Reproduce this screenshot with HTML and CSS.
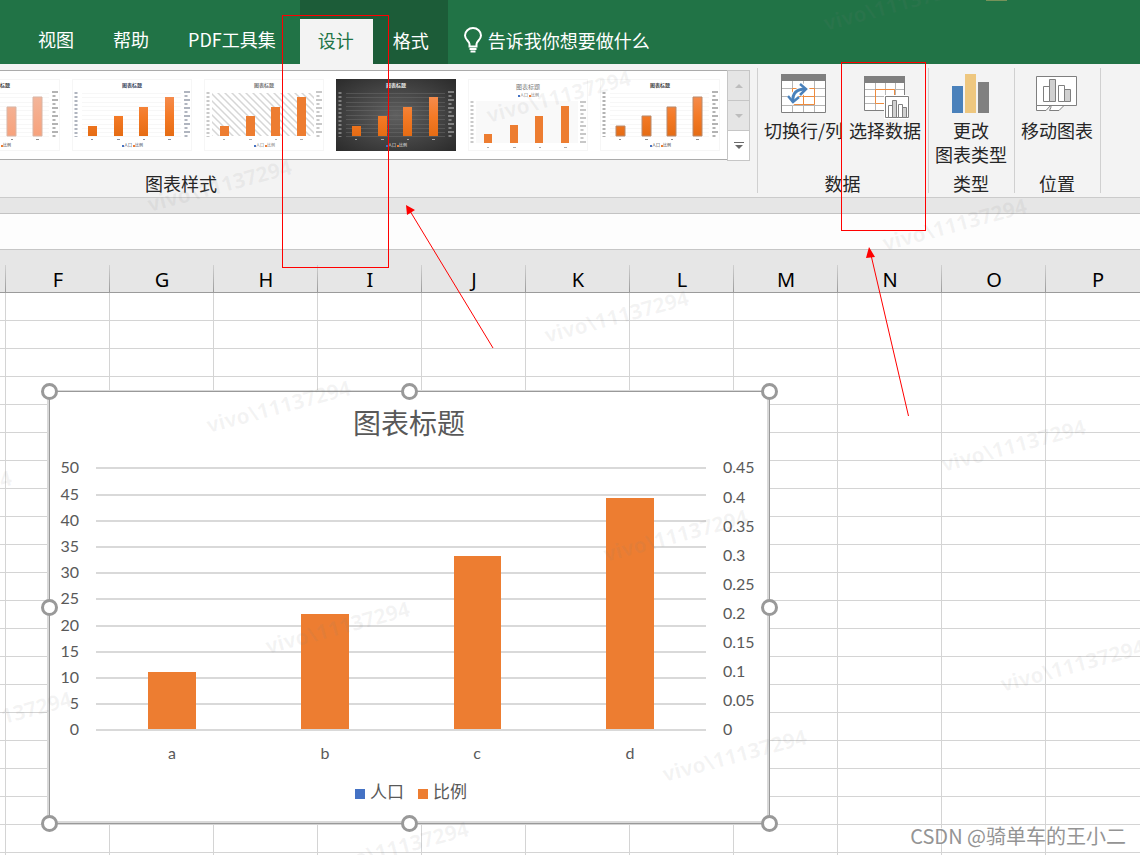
FILE: index.html
```html
<!DOCTYPE html>
<html lang="zh-CN">
<head>
<meta charset="utf-8">
<title>图表设计</title>
<link rel="stylesheet" href="styles.css">
</head>
<body>
<div class="app">
  <header class="titlebar">
    <nav class="tabs" aria-label="功能区选项卡">
      <button class="tab" type="button">视图</button>
      <button class="tab" type="button">帮助</button>
      <button class="tab" type="button">PDF工具集</button>
      <div class="context-tabs">
        <button class="tab tab-active" type="button">设计</button>
        <button class="tab tab-format" type="button">格式</button>
      </div>
      <button class="tell-me" type="button">
        <svg class="bulb" width="20" height="26" viewBox="0 0 20 26" aria-hidden="true">
          <path d="M6.500 19.500V17C6.500 14.500 2 12.500 2 8.500A8 7.500 0 0 1 18 8.500C18 12.500 13.500 14.500 13.500 17V19.500Z"/>
          <path d="M6.500 22H13.500M7.500 24.500H12.500"/>
        </svg>
        <span>告诉我你想要做什么</span>
      </button>
    </nav>
    <span class="title-mark"></span>
  </header>

  <section class="ribbon" aria-label="设计">
    <svg class="defs" width="0" height="0" aria-hidden="true">
      <defs>
        <linearGradient id="orange" x1="0" y1="0" x2="0" y2="1"><stop offset="0" stop-color="#f58b4c"/><stop offset=".5" stop-color="#f47a26"/><stop offset="1" stop-color="#e56c14"/></linearGradient>
        <linearGradient id="pale" x1="0" y1="0" x2="0" y2="1"><stop offset="0" stop-color="#f3b59a"/><stop offset="1" stop-color="#f7a27c"/></linearGradient>
        <radialGradient id="night" cx=".5" cy=".5" r=".7"><stop offset="0" stop-color="#606060"/><stop offset="1" stop-color="#2b2b2b"/></radialGradient>
        <pattern id="hatch" width="7" height="7" patternUnits="userSpaceOnUse"><path d="M-1 -1L8 8M-1 6L1 8M6 -1L8 1" stroke="#d6d6d6" stroke-width="1.500"/></pattern>
        <symbol id="axes" viewBox="0 0 120 72">
          <g class="axis-marks">
            <path d="M4 13V58M114 12V58"/>
            <path class="axis-wide" d="M115 12V58"/>
          </g>
          <path class="tiny-marks" d="M19 60.500h2M45 60.500h3M71 60.500h2M96 60.500h3"/>
          <text class="tiny-title" x="60" y="8">图表标题</text>
          <rect x="50" y="66" width="2" height="2" fill="#4472c4"/>
          <rect x="61" y="66" width="2" height="2" fill="#ed7d31"/>
          <text class="tiny-legend" x="52" y="68">人口</text>
          <text class="tiny-legend" x="63" y="68">比例</text>
        </symbol>
        <symbol id="lines" viewBox="0 0 120 72"><path d="M10 14.500H109M10 18.500H109M10 23.500H109M10 27.500H109M10 31.500H109M10 36.500H109M10 40.500H109M10 45.500H109M10 49.500H109M10 53.500H109M10 57.500H109"/></symbol>
        <symbol id="bars" viewBox="0 0 120 72"><path d="M16 47h9v10h-9zM42 37h9v20h-9zM67 28h9v29h-9zM93 18h9v39h-9z"/></symbol>
      </defs>
    </svg>

    <div class="group group-styles">
      <div class="gallery">
        <div class="strip">
          <button class="thumb" type="button" aria-label="样式 1"><svg width="120" height="72"><use class="rules" href="#lines"/><use href="#bars" fill="url(#pale)" stroke="#d9b5a5"/><use href="#axes"/></svg></button>
          <button class="thumb thumb-navy" type="button" aria-label="样式 2"><svg width="120" height="72"><use class="rules" href="#lines"/><use href="#bars" fill="url(#orange)"/><use href="#axes"/></svg></button>
          <button class="thumb thumb-soft" type="button" aria-label="样式 3"><svg width="120" height="72"><rect x="8" y="14" width="102" height="43" fill="url(#hatch)"/><use href="#bars" fill="#ed7d31"/><use href="#axes"/></svg></button>
          <button class="thumb thumb-dark" type="button" aria-label="样式 4"><svg width="120" height="72"><rect width="120" height="72" fill="url(#night)"/><use class="rules" href="#lines"/><use href="#bars" fill="url(#orange)"/><use href="#axes"/></svg></button>
          <button class="thumb thumb-soft" type="button" aria-label="样式 5"><svg width="120" height="72">
            <rect x="8" y="22" width="102" height="42" fill="#f9f9f9"/>
            <path d="M16 55h8v9h-8zM42 46h8v18h-8zM67 37h8v27h-8zM93 27h8v37h-8z" fill="#ed7d31"/>
            <g class="axis-marks"><path d="M4 22V65M114 22V65"/><path class="axis-wide" d="M115 22V65"/></g>
            <path class="tiny-marks" d="M19 68.500h2M45 68.500h3M71 68.500h2M96 68.500h3"/>
            <text class="tiny-title tiny-title-wide" x="60" y="10">图表标题</text>
            <rect x="50" y="16" width="2" height="2" fill="#4472c4"/><rect x="61" y="16" width="2" height="2" fill="#ed7d31"/>
            <text class="tiny-legend" x="52" y="18">人口</text><text class="tiny-legend" x="63" y="18">比例</text>
          </svg></button>
          <button class="thumb" type="button" aria-label="样式 6"><svg width="120" height="72"><use class="rules" href="#lines"/><use href="#bars" fill="url(#orange)" stroke="#b98a6c"/><use href="#axes"/></svg></button>
        </div>
        <div class="scroller">
          <button class="scroll-btn" type="button" aria-label="向上"><svg width="10" height="6"><path d="M1 5L5 1L9 5Z"/></svg></button>
          <button class="scroll-btn" type="button" aria-label="向下"><svg width="10" height="6"><path d="M1 1L5 5L9 1Z"/></svg></button>
          <button class="scroll-btn scroll-more" type="button" aria-label="其他"><svg width="10" height="8"><path d="M0 0H10V1H0ZM1 3L5 7L9 3Z"/></svg></button>
        </div>
      </div>
      <div class="group-label group-label-styles">图表样式</div>
    </div>

    <div class="group">
      <div class="commands">
        <button class="command" type="button">
          <svg width="48" height="45" viewBox="1 0 48 45" aria-hidden="true">
            <path d="M2 2H46V40H2Z" fill="#fff"/>
            <path d="M13.500 8V40M24.500 8V40M35.500 8V40M2 15.500H46M2 23.500H46M2 32.500H46" stroke="#b5b5b5"/>
            <path d="M2.500 2.500H46.500V39.500H2.500Z" fill="none" stroke="#7f7f7f"/>
            <path d="M2 1H47V8H2Z" fill="#7f7f7f"/>
            <path d="M13.500 15.500H35.500V31.500H13.500ZM24.500 15.500V31.500M13.500 23.500H35.500" fill="none" stroke="#ed8b3e"/>
            <path d="M14 29C13 20 18 16 26 16M21 11L27 16L21 22M9 23L14 29L20 24" fill="none" stroke="#fff" stroke-width="5"/>
            <path d="M14 29C13 20 18 16 26 16" fill="none" stroke="#4a81bb" stroke-width="3"/>
            <path d="M21 11L27 16L21 22M9 23L14 29L20 24" fill="none" stroke="#4a81bb" stroke-width="2.500"/>
          </svg>
          <span>切换行/列</span>
        </button>
        <button class="command" type="button">
          <svg width="48" height="45" aria-hidden="true">
            <path d="M3 4H44V38H3Z" fill="#fff"/>
            <path d="M14.500 10V38M24.500 10V38M34.500 10V38M3 16.500H44M3 23.500H44M3 30.500H44" stroke="#b5b5b5"/>
            <path d="M3.500 3.500H43.500V37.500H3.500Z" fill="none" stroke="#7f7f7f"/>
            <path d="M3 3H44V10H3Z" fill="#7f7f7f"/>
            <path d="M14.500 16.500H33.500V30.500H14.500Z" fill="none" stroke="#ed8b3e"/>
            <path d="M23 22H48V46H23Z" fill="#fff"/>
            <path d="M24.500 23.500H47.500V44.500H24.500Z" fill="#fff" stroke="#7f7f7f"/>
            <path d="M27.500 32.500H31.500V44.500H27.500ZM37.500 31.500H41.500V44.500H37.500Z" fill="#fff" stroke="#7f7f7f"/>
            <path d="M31.500 27.500H35.500V44.500H31.500ZM41.500 34.500H45.500V44.500H41.500Z" fill="#d0d0d0" stroke="#7f7f7f"/>
          </svg>
          <span>选择数据</span>
        </button>
      </div>
      <div class="group-label">数据</div>
    </div>

    <div class="group">
      <div class="commands">
        <button class="command" type="button">
          <svg width="48" height="45" aria-hidden="true">
            <path d="M5 13H16V40H5Z" fill="#4a81bb"/><path d="M18 1H29V40H18Z" fill="#eec77f"/><path d="M31 9H42V40H31Z" fill="#808080"/>
          </svg>
          <span>更改<br>图表类型</span>
        </button>
      </div>
      <div class="group-label">类型</div>
    </div>

    <div class="group">
      <div class="commands">
        <button class="command" type="button">
          <svg width="48" height="45" aria-hidden="true" fill="#fff" stroke="#7f7f7f">
            <path d="M3.500 32V37.500H13L18 32Z"/>
            <path d="M18 32.500H31L26 37.500H16.500Q18.500 34 18 32.500Z"/>
            <path d="M3.500 3.500H43.500V32.500H3.500Z"/>
            <path d="M10.500 13.500H16.500V28.500H10.500ZM25.500 12.500H31.500V28.500H25.500Z"/>
            <path d="M16.500 6.500H22.500V28.500H16.500ZM31.500 16.500H37.500V28.500H31.500Z" fill="#d0d0d0"/>
          </svg>
          <span>移动图表</span>
        </button>
      </div>
      <div class="group-label">位置</div>
    </div>
  </section>

  <div class="ribbon-gap"></div>
  <input class="formula" type="text" aria-label="编辑栏">

  <main class="sheet">
    <table class="grid">
      <colgroup><col class="col-edge"><col><col><col><col><col><col><col><col><col><col><col></colgroup>
      <thead>
        <tr><th></th><th>F</th><th>G</th><th>H</th><th>I</th><th>J</th><th>K</th><th>L</th><th>M</th><th>N</th><th>O</th><th>P</th></tr>
      </thead>
      <tbody id="rows"></tbody>
    </table>

    <svg class="chart" width="736" height="448" viewBox="-8 -8 736 448" role="img" aria-label="图表标题">
      <rect x="-2" y="-1" width="723" height="434" fill="#d9d9d9"/>
      <rect x="1" y="1" width="717" height="429" fill="#fff"/>
      <rect class="frame" x="0.500" y="0.500" width="720" height="432"/>
      <text class="chart-title" x="360" y="43">图表标题</text>
      <path class="gridlines" d="M47 77H657M47 104H657M47 130H657M47 156H657M47 182H657M47 208H657M47 235H657M47 261H657M47 287H657M47 313H657M47 339H657"/>
      <g fill="#ed7d31">
        <rect x="99" y="281" width="48" height="57"/>
        <rect x="252" y="223" width="48" height="115"/>
        <rect x="405" y="165" width="47" height="173"/>
        <rect x="557" y="107" width="48" height="231"/>
      </g>
      <g class="axis-left">
        <text x="30" y="82">50</text><text x="30" y="109">45</text><text x="30" y="135">40</text><text x="30" y="161">35</text><text x="30" y="187">30</text><text x="30" y="213">25</text><text x="30" y="240">20</text><text x="30" y="266">15</text><text x="30" y="292">10</text><text x="30" y="318">5</text><text x="30" y="344">0</text>
      </g>
      <g class="axis-right">
        <text x="674" y="82">0.45</text><text x="674" y="112">0.4</text><text x="674" y="141">0.35</text><text x="674" y="170">0.3</text><text x="674" y="199">0.25</text><text x="674" y="228">0.2</text><text x="674" y="257">0.15</text><text x="674" y="286">0.1</text><text x="674" y="315">0.05</text><text x="674" y="344">0</text>
      </g>
      <g class="axis-bottom">
        <text x="123" y="368">a</text><text x="276" y="368">b</text><text x="428" y="368">c</text><text x="581" y="368">d</text>
      </g>
      <rect x="306" y="398" width="10" height="10" fill="#4472c4"/>
      <text class="legend" x="321" y="407">人口</text>
      <rect x="369" y="398" width="10" height="10" fill="#ed7d31"/>
      <text class="legend" x="384" y="407">比例</text>
      <g class="handles">
        <circle cx="0.500" cy="0.500" r="7"/><circle cx="360.500" cy="0.500" r="7"/><circle cx="720.500" cy="0.500" r="7"/>
        <circle cx="0.500" cy="216.500" r="7"/><circle cx="720.500" cy="216.500" r="7"/>
        <circle cx="0.500" cy="432.500" r="7"/><circle cx="360.500" cy="432.500" r="7"/><circle cx="720.500" cy="432.500" r="7"/>
      </g>
    </svg>
  </main>

  <svg class="overlay" aria-hidden="true">
    <g class="stamps">
      <text transform="translate(826 31) rotate(-15)">vivo\11137294</text>
      <text transform="translate(489 123) rotate(-15)">vivo\11137294</text>
      <text transform="translate(150 212) rotate(-15)">vivo\11137294</text>
      <text transform="translate(885 251) rotate(-15)">vivo\11137294</text>
      <text transform="translate(547 343) rotate(-15)">vivo\11137294</text>
      <text transform="translate(209 433) rotate(-15)">vivo\11137294</text>
      <text transform="translate(-130 523) rotate(-15)">vivo\11137294</text>
      <text transform="translate(944 472) rotate(-15)">vivo\11137294</text>
      <text transform="translate(606 562) rotate(-15)">vivo\11137294</text>
      <text transform="translate(268 654) rotate(-15)">vivo\11137294</text>
      <text transform="translate(-70 744) rotate(-15)">vivo\11137294</text>
      <text transform="translate(1003 692) rotate(-15)">vivo\11137294</text>
      <text transform="translate(665 782) rotate(-15)">vivo\11137294</text>
      <text transform="translate(327 874) rotate(-15)">vivo\11137294</text>
    </g>
    <g class="marks">
      <rect x="282.500" y="15.500" width="106" height="252"/>
      <rect x="841.500" y="62.500" width="84" height="168"/>
      <path d="M493 348L410 211M908.500 416L871 255"/>
      <path class="heads" d="M406 205L415 210L407 215ZM869 247L875 257L866 258Z"/>
    </g>
  </svg>
  <div class="credit">CSDN @骑单车的王小二</div>
</div>
<script src="rows.js"></script>
</body>
</html>
```
FILE: styles.css
```css
* { box-sizing: border-box; }

body {
  margin: 0;
  font-family: "Noto Sans CJK SC", "Noto Sans", sans-serif;
  font-size: 18px;
  color: #262626;
}

button {
  margin: 0;
  padding: 0;
  border: 0;
  background: none;
  font: inherit;
  color: inherit;
}

.app {
  position: relative;
  display: flex;
  flex-direction: column;
  height: 100vh;
  overflow: hidden;
}

/* title bar and tabs */
.titlebar {
  position: relative;
  background: #217346;
}

.tabs {
  display: flex;
  align-items: stretch;
  gap: 1px;
  height: 64px;
  padding-left: 19px;
  color: #fff;
}

.tab {
  padding: 18px 19px 4px;
  line-height: 42px;
  white-space: nowrap;
}

.context-tabs {
  display: flex;
  align-items: flex-end;
  margin-left: 4px;
  background: #1c5c38;
}

.context-tabs .tab {
  height: 45px;
  padding: 0 18px 4px;
}

.context-tabs .tab-active {
  padding-right: 19px;
  background: #f3f3f3;
  color: #217346;
}

.context-tabs .tab-format { padding: 0 19px 4px 20px; }

.tell-me {
  display: flex;
  align-items: center;
  gap: 5px;
  padding: 16px 0 0 14px;
  white-space: nowrap;
}

.bulb {
  fill: none;
  stroke: #fff;
  stroke-width: 2;
}

.title-mark {
  position: absolute;
  top: 0;
  right: 133px;
  width: 21px;
  height: 1px;
  background: #76925a;
}

/* ribbon */
.defs { position: absolute; }

.ribbon {
  display: grid;
  grid-template-columns: minmax(0, 758px) auto auto auto 1fr;
  padding: 4px 0;
  background: #f3f3f3;
  border-bottom: 1px solid #cbcbcb;
}

.group {
  display: flex;
  flex-direction: column;
  justify-content: space-between;
  padding: 0 7px 0 6px;
  border-right: 1px solid #d0d0d0;
}

.group-styles { padding: 2px 7px 0 0; }

.group-label {
  padding-bottom: 1px;
  line-height: 18px;
  text-align: center;
}

.group-label-styles {
  padding-left: 145px;
  text-align: left;
}

.gallery {
  display: flex;
  height: 91px;
}

.strip {
  display: flex;
  flex: 1;
  justify-content: flex-end;
  gap: 12px;
  min-width: 0;
  height: 90px;
  padding: 8px 7px 0 0;
  overflow: hidden;
  background: #fff;
  border-top: 1px solid #ababab;
  border-bottom: 1px solid #ababab;
}

.thumb {
  flex: none;
  width: 120px;
  height: 72px;
  color: #444;
  outline: 1px solid #f6f6f6;
  outline-offset: -1px;
}

.thumb svg { display: block; }
.thumb-navy { color: #3b4860; }
.thumb-soft { color: #777; }
.thumb-dark { color: #e8e8e8; outline: none; }
.rules { stroke: #f7f7f7; }
.thumb-dark .rules { stroke: #6c6c6c; stroke-opacity: 0.5; }

.axis-marks {
  fill: none;
  stroke: currentColor;
  stroke-width: 3;
  stroke-dasharray: 2 2;
  opacity: 0.4;
}

.axis-wide { stroke-width: 6; stroke-dasharray: 2 6; }
.tiny-marks { stroke: currentColor; opacity: 0.6; }

.tiny-title {
  font-size: 5px;
  font-weight: 700;
  fill: currentColor;
  text-anchor: middle;
}

.tiny-title-wide { font-size: 6px; font-weight: 400; }
.tiny-legend { font-size: 4px; fill: currentColor; }

.scroller {
  display: flex;
  flex-direction: column;
  width: 23px;
}

.scroll-btn {
  display: flex;
  flex: 1;
  align-items: center;
  justify-content: center;
  background: #e5e5e5;
  border: 1px solid #c6c6c6;
  border-bottom: 0;
  fill: #bdbdbd;
}

.scroll-more {
  background: #fff;
  border-bottom: 1px solid #c6c6c6;
  fill: #6a6a6a;
}

.commands {
  display: flex;
  align-items: flex-start;
  gap: 6px;
  margin-bottom: 8px;
}

.command {
  display: flex;
  flex-direction: column;
  align-items: center;
  padding-top: 5px;
  line-height: 24px;
  white-space: nowrap;
}

.command svg { overflow: visible; }

.ribbon-gap {
  height: 16px;
  background: #e6e6e6;
  border-bottom: 1px solid #c3c3c3;
}

.formula {
  height: 36px;
  padding: 0 8px;
  border: 0;
  border-bottom: 1px solid #c6c6c6;
  background: #fdfdfd;
  font: inherit;
}

/* sheet */
.sheet {
  position: relative;
  flex: 1;
  min-height: 0;
  overflow: hidden;
  background: #fff;
}

.grid {
  width: 1150px;
  table-layout: fixed;
  border-collapse: separate;
  border-spacing: 0;
}

.grid col { width: 104px; }
.grid .col-edge { width: 6px; }

.grid th {
  height: 43px;
  padding: 18px 0 0;
  border-bottom: 1px solid #9b9b9b;
  background: linear-gradient(#d0d0d0, #9b9b9b) right bottom / 1px 27px no-repeat #e6e6e6;
  font: 20px/24px "Noto Sans", sans-serif;
  color: #000;
}

.grid td {
  height: 28px;
  padding: 0;
  border-right: 1px solid #d4d4d4;
  border-bottom: 1px solid #d4d4d4;
}

/* chart */
.chart {
  position: absolute;
  top: 133px;
  left: 41px;
  overflow: visible;
  fill: #595959;
}

.frame { fill: none; stroke: #999; }
.gridlines { stroke: #d9d9d9; stroke-width: 2; }
.chart-title { font-size: 28px; text-anchor: middle; }
.legend { font-size: 17px; }
.axis-left, .axis-right, .axis-bottom { font: 16px Lato, sans-serif; }
.axis-left { text-anchor: end; }
.axis-bottom { text-anchor: middle; }
.handles { fill: #fff; stroke: #999; stroke-width: 3; }

/* layers over the page */
.overlay {
  position: absolute;
  inset: 0;
  width: 100%;
  height: 100%;
  pointer-events: none;
}

.stamps {
  font: 700 21px "Noto Sans", sans-serif;
  fill: #808080;
  fill-opacity: 0.09;
}

.marks { fill: none; stroke: #f00; }
.heads { fill: #f00; stroke: none; }

.credit {
  position: absolute;
  right: 14px;
  bottom: 5px;
  font-size: 20px;
  line-height: 28px;
  color: #949494;
  text-shadow: -1px -1px 0 #fff;
}
```
FILE: rows.js
```js
const body = document.getElementById("rows");
for (let r = 0; r < 21; r++) {
  const row = body.insertRow();
  for (let c = 0; c < 12; c++) row.insertCell();
}
```
